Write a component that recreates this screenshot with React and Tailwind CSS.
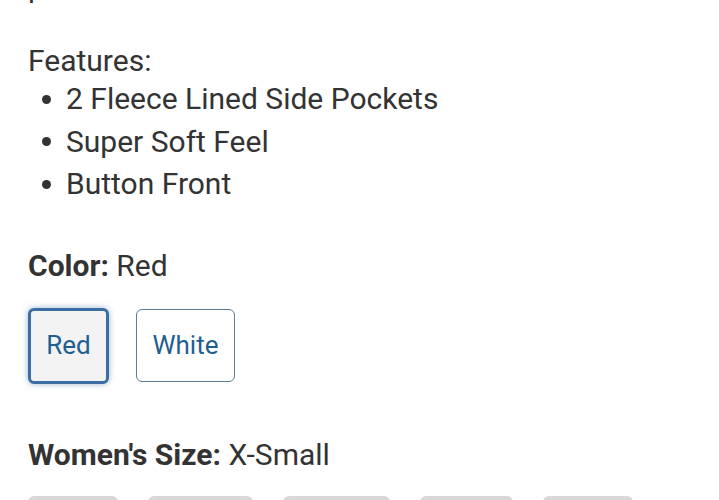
export default function App() {
  const sizes = [90, 105, 107, 93, 90];
  const features = ['2 Fleece Lined Side Pockets', 'Super Soft Feel', 'Button Front'];
  return (
    <div className="w-[719px] h-[500px] overflow-hidden bg-white text-[#333333] font-['Roboto',sans-serif]">
      <div className="pl-[28px]">
        <p className="text-[30px] leading-[42px] -mt-[34px]">plush</p>

        <p className="text-[30px] leading-[39px] mt-[33px]">Features:</p>
        <ul className="text-[30px] leading-[42.5px] -mt-[2px]">
          {features.map((f) => (
            <li key={f} className="flex items-center">
              <span className="w-[38px] flex pl-[14px]">
                <span className="w-[9px] h-[9px] rounded-full bg-[#333333]" />
              </span>
              {f}
            </li>
          ))}
        </ul>

        <p className="text-[30px] leading-[42px] mt-[39px]"><span className="font-bold">Color:</span> Red</p>

        <div className="flex items-center gap-[27px] mt-[21px]">
          <button className="w-[81px] h-[76px] rounded-[6px] border-[3px] border-[#3b6fa3] bg-[#f3f3f3] text-[26px] text-[#1f5f8f] shadow-[0_0_6px_rgba(59,111,163,0.5)]">
            Red
          </button>
          <button className="w-[99px] h-[73px] rounded-[6px] border border-[#5a7d93] bg-white text-[26px] text-[#1f5f8f]">
            White
          </button>
        </div>

        <p className="text-[30px] leading-[42px] mt-[50px]"><span className="font-bold">Women's Size:</span> X-Small</p>

        <div className="flex gap-[30px] mt-[20px]">
          {sizes.map((w, i) => (
            <div key={i} className="h-[40px] rounded-[6px] bg-[#d8d8d8]" style={{ width: w }} />
          ))}
        </div>
      </div>
    </div>
  );
}
